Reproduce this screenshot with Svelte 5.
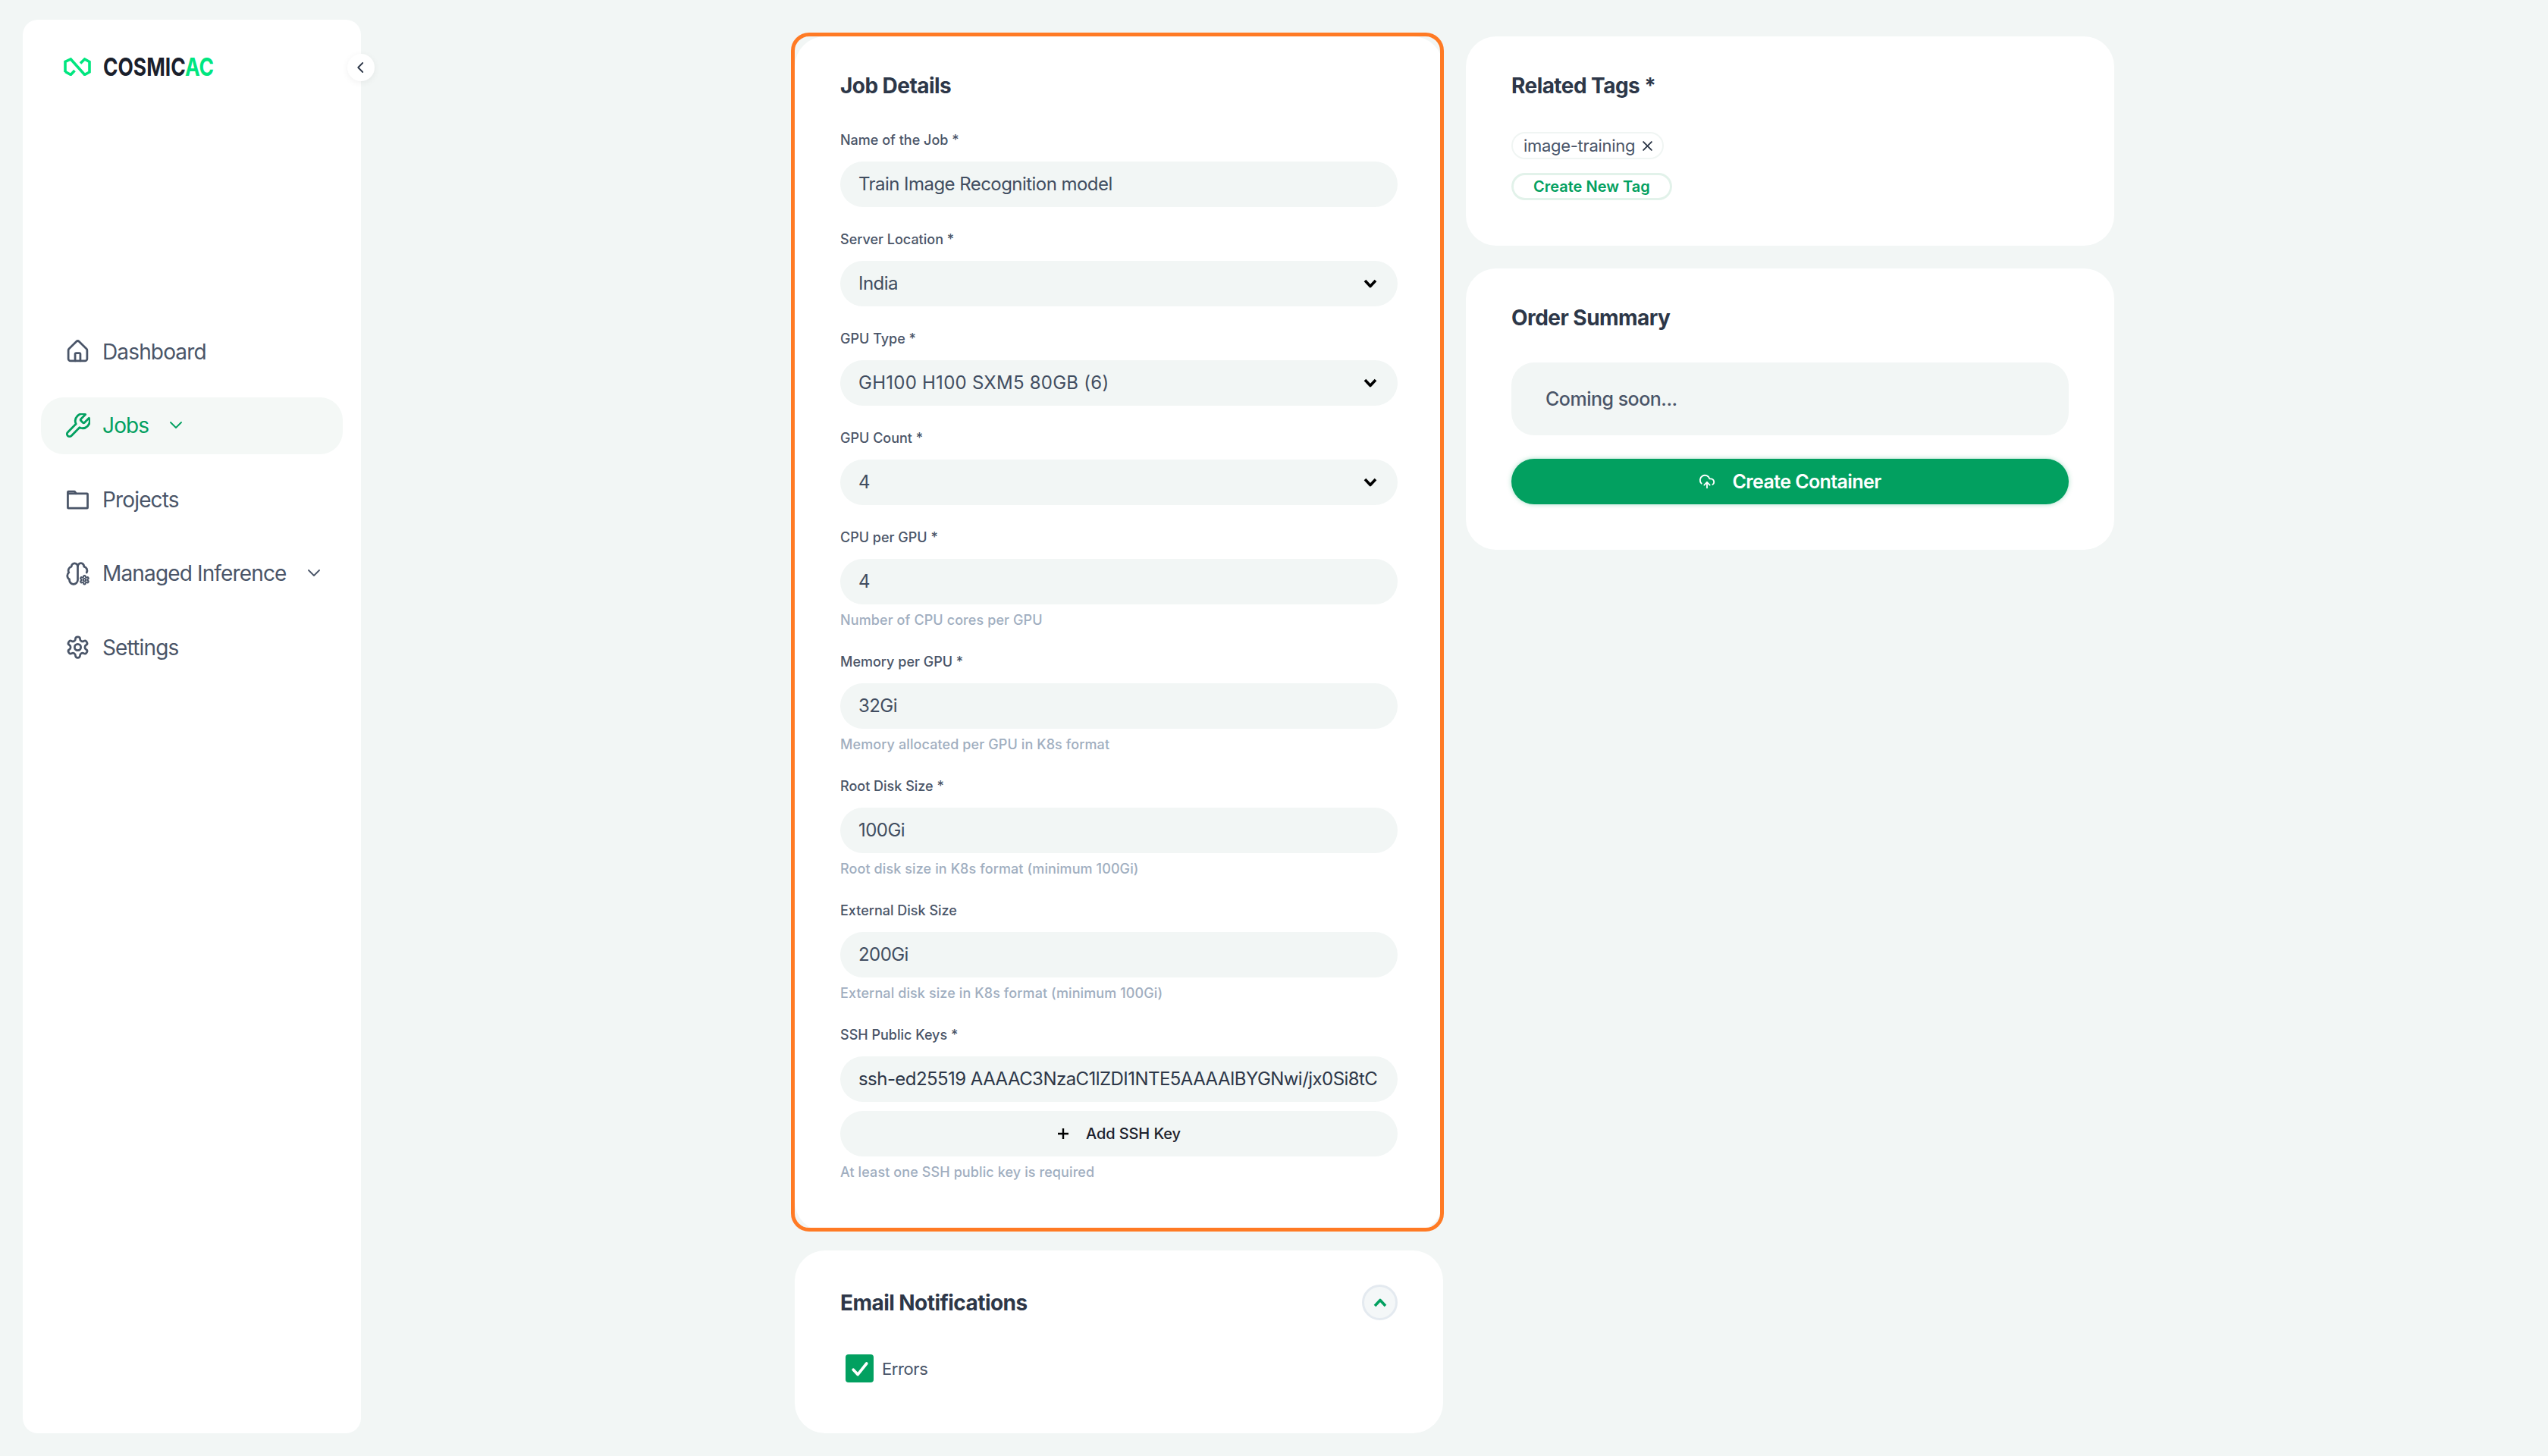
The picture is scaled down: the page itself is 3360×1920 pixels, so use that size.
<script>
  const navItems = [
    { label: "Dashboard", icon: "home" },
    { label: "Jobs", icon: "wrench", active: true, caret: true },
    { label: "Projects", icon: "folder" },
    { label: "Managed Inference", icon: "brain", caret: true },
    { label: "Settings", icon: "gear" }
  ];

  const fields = [
    { label: "Name of the Job *", value: "Train Image Recognition model" },
    { label: "Server Location *", value: "India", select: true },
    { label: "GPU Type *", value: "GH100 H100 SXM5 80GB (6)", select: true, caps: true },
    { label: "GPU Count *", value: "4", select: true },
    { label: "CPU per GPU *", value: "4", hint: "Number of CPU cores per GPU" },
    { label: "Memory per GPU *", value: "32Gi", hint: "Memory allocated per GPU in K8s format" },
    { label: "Root Disk Size *", value: "100Gi", hint: "Root disk size in K8s format (minimum 100Gi)" },
    { label: "External Disk Size", value: "200Gi", hint: "External disk size in K8s format (minimum 100Gi)" }
  ];

  const gear =
    "M12.22 2h-.44a2 2 0 0 0-2 2v.18a2 2 0 0 1-1 1.73l-.43.25a2 2 0 0 1-2 0l-.15-.08a2 2 0 0 0-2.73.73l-.22.38a2 2 0 0 0 .73 2.73l.15.1a2 2 0 0 1 1 1.72v.51a2 2 0 0 1-1 1.74l-.15.09a2 2 0 0 0-.73 2.73l.22.38a2 2 0 0 0 2.73.73l.15-.08a2 2 0 0 1 2 0l.43.25a2 2 0 0 1 1 1.73V20a2 2 0 0 0 2 2h.44a2 2 0 0 0 2-2v-.18a2 2 0 0 1 1-1.73l.43-.25a2 2 0 0 1 2 0l.15.08a2 2 0 0 0 2.73-.73l.22-.39a2 2 0 0 0-.73-2.73l-.15-.08a2 2 0 0 1-1-1.74v-.5a2 2 0 0 1 1-1.74l.15-.09a2 2 0 0 0 .73-2.73l-.22-.38a2 2 0 0 0-2.73-.73l-.15.08a2 2 0 0 1-2 0l-.43-.25a2 2 0 0 1-1-1.73V4a2 2 0 0 0-2-2z";
</script>

<div class="page">
  <aside class="sidebar">
    <div class="logo">
      <svg class="logo-mark" viewBox="0 0 36 24" fill="none" stroke="#00e67f" stroke-width="3.6">
        <path d="M2 19V5.5L9.3 2 27.6 22.5 34 19V5.5L27.6 2 22 7.5" />
        <path d="M2 18.5 9.3 22.5 14.5 17" />
      </svg>
      <span class="wordmark">COSMIC<span class="accent">AC</span></span>
    </div>
    <button class="collapse" aria-label="Collapse">
      <svg viewBox="0 0 24 24" fill="none" stroke="#2d3748" stroke-width="2.4" stroke-linecap="round" stroke-linejoin="round">
        <path d="m15 4-8 8 8 8" />
      </svg>
    </button>

    <nav>
      {#each navItems as item}
        <div class="nav-item {item.active ? 'active' : ''}">
          <svg class="nav-icon" viewBox={item.icon === "wrench" ? "1.5 1.5 21 21" : "0 0 24 24"} fill="none" stroke="currentColor" stroke-width={item.icon === "wrench" ? 1.8 : 2} stroke-linecap="round" stroke-linejoin="round">
            {#if item.icon === "home"}
              <path d="M14.5 21v-6.5a1 1 0 0 0-1-1h-3a1 1 0 0 0-1 1V21" />
              <path d="M3 11a2 2 0 0 1 .6-1.5l7-7a2 2 0 0 1 2.8 0l7 7A2 2 0 0 1 21 11v8a2 2 0 0 1-2 2H5a2 2 0 0 1-2-2z" />
            {:else if item.icon === "wrench"}
              <path d="M14.7 6.3a1 1 0 0 0 0 1.4l1.6 1.6a1 1 0 0 0 1.4 0l3.77-3.77a6 6 0 0 1-7.94 7.94l-6.91 6.91a2.12 2.12 0 0 1-3-3l6.91-6.91a6 6 0 0 1 7.94-7.94l-3.76 3.76z" />
            {:else if item.icon === "folder"}
              <path d="M3 4.5h6l1.5 2H21a.5.5 0 0 1 .5.5v13a.5.5 0 0 1-.5.5H3a.5.5 0 0 1-.5-.5V5a.5.5 0 0 1 .5-.5z" />
              <path d="M3 6.5h7" />
            {:else if item.icon === "brain"}
              <path d="M12 5a3 3 0 1 0-5.997.142 4 4 0 0 0-2.526 5.77 4 4 0 0 0 .556 6.588A4 4 0 1 0 12 18Z" />
              <path d="M12 5a3 3 0 1 1 5.997.125 4 4 0 0 1 2.526 5.77" />
              <g transform="translate(13.46 12.96) scale(.42)" stroke-width="3.6">
                <path d={gear} fill="#fff" />
                <circle cx="12" cy="12" r="3" />
              </g>
            {:else}
              <path d={gear} />
              <circle cx="12" cy="12" r="3" />
            {/if}
          </svg>
          <span>{item.label}</span>
          {#if item.caret}
            <svg class="nav-caret" viewBox="0 0 16 10" fill="none" stroke="currentColor" stroke-width="1.8" stroke-linecap="round" stroke-linejoin="round">
              <path d="m1 1 7 7 7-7" />
            </svg>
          {/if}
        </div>
      {/each}
    </nav>
  </aside>

  <main>
    <div class="column">
      <section class="card job-card">
        <h2>Job Details</h2>
        {#each fields as field}
          <div class="field">
            <div class="label">{field.label}</div>
            <div class="input">
              <span class={field.caps ? "caps" : ""}>{field.value}</span>
              {#if field.select}
                <svg class="select-caret" viewBox="0 0 18 12" fill="none" stroke="#000" stroke-width="3.6" stroke-linejoin="round">
                  <path d="m2 2 7 7.5L16 2" />
                </svg>
              {/if}
            </div>
            {#if field.hint}
              <div class="hint">{field.hint}</div>
            {/if}
          </div>
        {/each}
        <div class="field ssh">
          <div class="label">SSH Public Keys *</div>
          <div class="input"><span class="key">ssh-ed25519 AAAAC3NzaC1lZDI1NTE5AAAAIBYGNwi/jx0Si8tC</span></div>
          <div class="add-key">
            <svg viewBox="0 0 16 16" fill="none" stroke="#000" stroke-width="2.4"><path d="M8 1v14M1 8h14" /></svg>
            <span>Add SSH Key</span>
          </div>
          <div class="hint">At least one SSH public key is required</div>
        </div>
      </section>

      <section class="card email-card">
        <div class="email-head">
          <h2>Email Notifications</h2>
          <button class="toggle" aria-label="Collapse">
            <svg viewBox="0 0 18 12" fill="none" stroke="#02a060" stroke-width="3.6" stroke-linejoin="round">
              <path d="m2 10 7-7.5 7 7.5" />
            </svg>
          </button>
        </div>
        <div class="check-row">
          <span class="checkbox">
            <svg viewBox="0 0 24 24" fill="none" stroke="#fff" stroke-width="3.2" stroke-linecap="round" stroke-linejoin="round">
              <path d="m4.5 13 5 5.5L19.5 6" />
            </svg>
          </span>
          <span>Errors</span>
        </div>
      </section>
    </div>

    <div class="column">
      <section class="card tags-card">
        <h2>Related Tags *</h2>
        <div class="tag-list">
          <div class="tag">
            <span>image-training</span>
            <svg viewBox="0 0 14 14" fill="none" stroke="#2d3748" stroke-width="1.8" stroke-linecap="round"><path d="m2 2 10 10M12 2 2 12" /></svg>
          </div>
          <div class="new-tag">Create New Tag</div>
        </div>
      </section>

      <section class="card order-card">
        <h2>Order Summary</h2>
        <div class="soon">Coming soon...</div>
        <button class="create">
          <svg viewBox="0 0 24 24" fill="none" stroke="#fff" stroke-width="2" stroke-linecap="round" stroke-linejoin="round">
            <path d="M12 13v8" />
            <path d="M4 14.899A7 7 0 1 1 15.71 8h1.79a4.5 4.5 0 0 1 2.5 8.242" />
            <path d="m8 17 4-4 4 4" />
          </svg>
          <span>Create Container</span>
        </button>
      </section>
    </div>
  </main>
</div>

<style>
  :global(body) {
    margin: 0;
    background: #f2f6f5;
    font-family: Inter, "Liberation Sans", sans-serif;
    color: #4a5568;
  }

  .page {
    display: flex;
    height: 1920px;
    box-sizing: border-box;
    padding: 26px 0 30px 30px;
  }

  .sidebar {
    position: relative;
    width: 446px;
    flex-shrink: 0;
    background: #fff;
    border-radius: 20px;
  }

  .logo {
    display: flex;
    align-items: center;
    gap: 16px;
    padding: 50px 0 0 54px;
    height: 24px;
  }

  .logo-mark {
    width: 36px;
    height: 24px;
  }

  .wordmark {
    font-size: 33px;
    line-height: 24px;
    font-weight: 700;
    transform: scaleX(0.8);
    transform-origin: left center;
    color: #1a202c;
  }

  .accent {
    color: #00e67f;
  }

  .collapse {
    position: absolute;
    top: 45px;
    right: -18px;
    width: 36px;
    height: 36px;
    padding: 9px;
    border: none;
    border-radius: 50%;
    background: #fff;
    box-shadow: 0 2px 10px rgba(0, 0, 0, 0.06);
  }

  .collapse svg {
    display: block;
    width: 18px;
    height: 18px;
  }

  nav {
    display: flex;
    flex-direction: column;
    gap: 22.5px;
    margin: 326px 24px 0;
  }

  .nav-item {
    display: flex;
    align-items: center;
    height: 75px;
    padding-left: 32px;
    border-radius: 30px;
    font-size: 28px;
    letter-spacing: -0.85px;
    color: #4a5568;
  }

  .nav-item.active {
    background: #f4f8f6;
    color: #02a060;
  }

  .nav-icon {
    width: 33px;
    height: 33px;
    margin-right: 16px;
    flex-shrink: 0;
  }

  .nav-caret {
    width: 16px;
    height: 10px;
    margin-left: 28px;
  }

  main {
    flex: 1;
    display: flex;
    justify-content: center;
    gap: 30px;
    padding-top: 22px;
  }

  .column {
    width: 855px;
    display: flex;
    flex-direction: column;
    gap: 30px;
  }

  .card {
    position: relative;
    box-sizing: border-box;
    background: #fff;
    border-radius: 40px;
    padding: 0 60px;
  }

  h2 {
    margin: 0;
    font-size: 28px;
    line-height: 40px;
    font-weight: 700;
    letter-spacing: -0.55px;
    color: #2d3748;
  }

  .job-card {
    height: 1576px;
    padding-top: 45px;
  }

  .job-card::after {
    content: "";
    position: absolute;
    inset: -5px -1px 0 -5px;
    border: 5px solid #ff7a24;
    border-radius: 24px;
    pointer-events: none;
  }

  .job-card h2 {
    margin-bottom: 39px;
  }

  .field {
    margin-bottom: 30px;
  }

  .label {
    font-size: 18px;
    line-height: 26px;
    font-weight: 500;
    color: #4a5568;
    margin-bottom: 15px;
  }

  .input {
    display: flex;
    align-items: center;
    justify-content: space-between;
    height: 60px;
    box-sizing: border-box;
    padding: 0 24px 2px;
    border-radius: 30px;
    background: #f2f6f5;
    font-size: 24px;
    letter-spacing: -0.55px;
    color: #414d60;
  }

  .caps {
    letter-spacing: 0.25px;
  }

  .key {
    white-space: nowrap;
    overflow: hidden;
    color: #2d3748;
  }

  .select-caret {
    width: 18px;
    height: 12px;
    margin: 2px 3px 0 0;
  }

  .hint {
    margin-top: 8px;
    font-size: 18px;
    line-height: 25px;
    font-weight: 500;
    letter-spacing: 0.1px;
    color: #a0aec0;
  }

  .add-key {
    display: flex;
    align-items: center;
    justify-content: center;
    gap: 22px;
    height: 60px;
    margin-top: 12px;
    border-radius: 30px;
    background: #f2f6f5;
    font-size: 20px;
    font-weight: 500;
    letter-spacing: -0.1px;
    color: #1a202c;
  }

  .add-key svg {
    width: 16px;
    height: 16px;
  }

  .email-card {
    height: 241px;
    margin-top: -5px;
    padding-top: 45px;
  }

  .email-head {
    display: flex;
    align-items: center;
    justify-content: space-between;
  }

  .toggle {
    width: 47px;
    height: 47px;
    padding: 0;
    border: 3px solid #e4eaf0;
    border-radius: 50%;
    background: #f4f7f8;
    display: flex;
    align-items: center;
    justify-content: center;
  }

  .toggle svg {
    width: 18px;
    height: 12px;
  }

  .check-row {
    display: flex;
    align-items: center;
    gap: 11px;
    margin: 45px 0 0 7px;
    font-size: 22px;
    letter-spacing: -0.4px;
    color: #4a5568;
  }

  .checkbox {
    width: 37px;
    height: 37px;
    border-radius: 4px;
    background: #02a060;
    display: flex;
    align-items: center;
    justify-content: center;
  }

  .checkbox svg {
    width: 28px;
    height: 28px;
  }

  .tags-card {
    height: 276px;
    padding-top: 45px;
  }

  .tag-list {
    display: flex;
    flex-direction: column;
    align-items: flex-start;
    gap: 18px;
    margin-top: 41px;
  }

  .tag {
    display: flex;
    align-items: center;
    gap: 9px;
    height: 36px;
    box-sizing: border-box;
    padding: 0 12px 0 14px;
    border: 2px solid #f0f5f3;
    border-radius: 18px;
    font-size: 22px;
    letter-spacing: -0.3px;
    color: #4a5568;
  }

  .tag svg {
    width: 15px;
    height: 15px;
  }

  .new-tag {
    display: flex;
    align-items: center;
    height: 36px;
    box-sizing: border-box;
    padding: 0 26px;
    border: 3px solid #e2f2ea;
    border-radius: 18px;
    font-size: 20px;
    font-weight: 600;
    color: #02a060;
  }

  .order-card {
    height: 371px;
    padding-top: 45px;
  }

  .soon {
    display: flex;
    align-items: center;
    height: 96px;
    margin-top: 39px;
    padding-left: 45px;
    border-radius: 30px;
    background: #f2f6f5;
    font-size: 25px;
    font-weight: 500;
    letter-spacing: -0.5px;
    color: #4a5568;
  }

  .create {
    display: flex;
    align-items: center;
    justify-content: center;
    gap: 22px;
    width: 100%;
    height: 60px;
    margin-top: 31px;
    border: none;
    border-radius: 30px;
    background: #02a060;
    box-shadow: 0 0 6px rgba(2, 160, 96, 0.35);
    font-family: inherit;
    font-size: 25px;
    font-weight: 600;
    letter-spacing: -0.6px;
    color: #fff;
  }

  .create svg {
    width: 22px;
    height: 22px;
  }
</style>
